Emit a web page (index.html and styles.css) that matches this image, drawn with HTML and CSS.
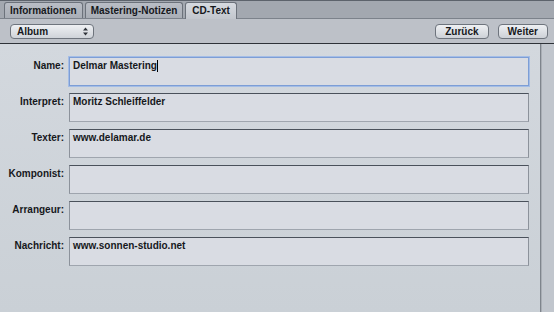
FILE: index.html
```html
<!DOCTYPE html>
<html lang="de">
<head>
    <meta charset="UTF-8">
    <title>CD-Text</title>
    <link rel="stylesheet" href="styles.css">
</head>
<body>
    <!-- Reiter -->
    <div class="tabs">
        <div class="tab">Informationen</div>
        <div class="tab">Mastering-Notizen</div>
        <div class="tab active">CD-Text</div>
    </div>

    <!-- Werkzeugleiste -->
    <div class="toolbar">
        <div class="popup">
            <span>Album</span>
            <svg class="arrows" width="5" height="9" viewBox="0 0 5 9">
                <path d="M0 3.5 L2.5 0.5 L5 3.5 Z M0 5.5 L2.5 8.5 L5 5.5 Z" fill="#2f333a"/>
            </svg>
        </div>
        <div class="nav">
            <button class="btn">Zurück</button>
            <button class="btn">Weiter</button>
        </div>
    </div>

    <div class="main">
        <div class="form">
            <div class="row">
                <label>Name:</label>
                <div class="field focus">Delmar Mastering<span class="caret"></span></div>
            </div>
            <div class="row">
                <label>Interpret:</label>
                <div class="field">Moritz Schleiffelder</div>
            </div>
            <div class="row">
                <label>Texter:</label>
                <div class="field">www.delamar.de</div>
            </div>
            <div class="row">
                <label>Komponist:</label>
                <div class="field"></div>
            </div>
            <div class="row">
                <label>Arrangeur:</label>
                <div class="field"></div>
            </div>
            <div class="row">
                <label>Nachricht:</label>
                <div class="field">www.sonnen-studio.net</div>
            </div>
        </div>
        <div class="side"></div>
    </div>
</body>
</html>
```

FILE: styles.css
```css
/* CSS */
body {
    margin: 0;
    padding: 0;
    width: 554px;
    height: 312px;
    overflow: hidden;
    font-family: "Liberation Sans", Arial, sans-serif;
    font-weight: bold;
    font-size: 10px;
    color: #16181c;
    background-color: #cdd3d9;
    display: flex;
    flex-direction: column;
}

.tabs {
    height: 15px;
    padding: 2px 0 0 4px;
    background-color: #a3a8b0;
    border-top: 1px solid #5d636c;
    display: flex;
    gap: 2px;
    align-items: flex-end;
}

.tab {
    height: 15px;
    padding: 0 5px;
    line-height: 15px;
    background: linear-gradient(#b9bdc5, #a9aeb6);
    border: 1px solid #6c727b;
    border-bottom: none;
    border-radius: 3px 3px 0 0;
}

.tab.active {
    height: 16px;
    margin-bottom: -1px;
    padding: 0 6px;
    background: linear-gradient(#d6dae0, #c2c6cd);
    position: relative;
}

.toolbar {
    height: 24px;
    padding: 0 6px 0 10px;
    background-color: #bdc1c8;
    border-top: 1px solid #7c828b;
    border-bottom: 1px solid #2e3238;
    display: flex;
    align-items: center;
    justify-content: space-between;
}

.popup {
    width: 71px;
    height: 13px;
    padding: 0 5px 0 6px;
    line-height: 13px;
    background: linear-gradient(#eef0f3, #cfd3d9);
    border: 1px solid #6e747d;
    border-radius: 4px;
    display: flex;
    justify-content: space-between;
    align-items: center;
}

.nav {
    display: flex;
    gap: 9px;
}

.btn {
    height: 15px;
    padding: 0 9px;
    font: inherit;
    color: inherit;
    background: linear-gradient(#eef0f3, #cdd1d7);
    border: 1px solid #6e747d;
    border-radius: 4px;
}

.main {
    flex: 1;
    display: flex;
}

.form {
    flex: 1;
    padding: 13px 11px 0 0;
    display: flex;
    flex-direction: column;
    gap: 7px;
    background: linear-gradient(#d3d8de, #cad0d6);
    border-right: 1px solid #7e848c;
}

.row {
    display: flex;
    gap: 5px;
}

.row label {
    width: 64px;
    padding-top: 3px;
    line-height: 12px;
    text-align: right;
}

.field {
    flex: 1;
    height: 25px;
    padding: 2px 3px 0;
    background-color: #d9dce3;
    border: 1px solid #8c929b;
    border-top-color: #4a515b;
    border-bottom-color: #9fa5ae;
    line-height: 12px;
}

.field.focus {
    border-color: #7d9ed6;
    box-shadow: 0 0 0 1px #a4bde6;
}

.caret {
    display: inline-block;
    width: 1px;
    height: 12px;
    background-color: #000;
    vertical-align: top;
}

.side {
    width: 12px;
    background-color: #c1c6cd;
    border-left: 1px solid #a9aeb5;
}
```
